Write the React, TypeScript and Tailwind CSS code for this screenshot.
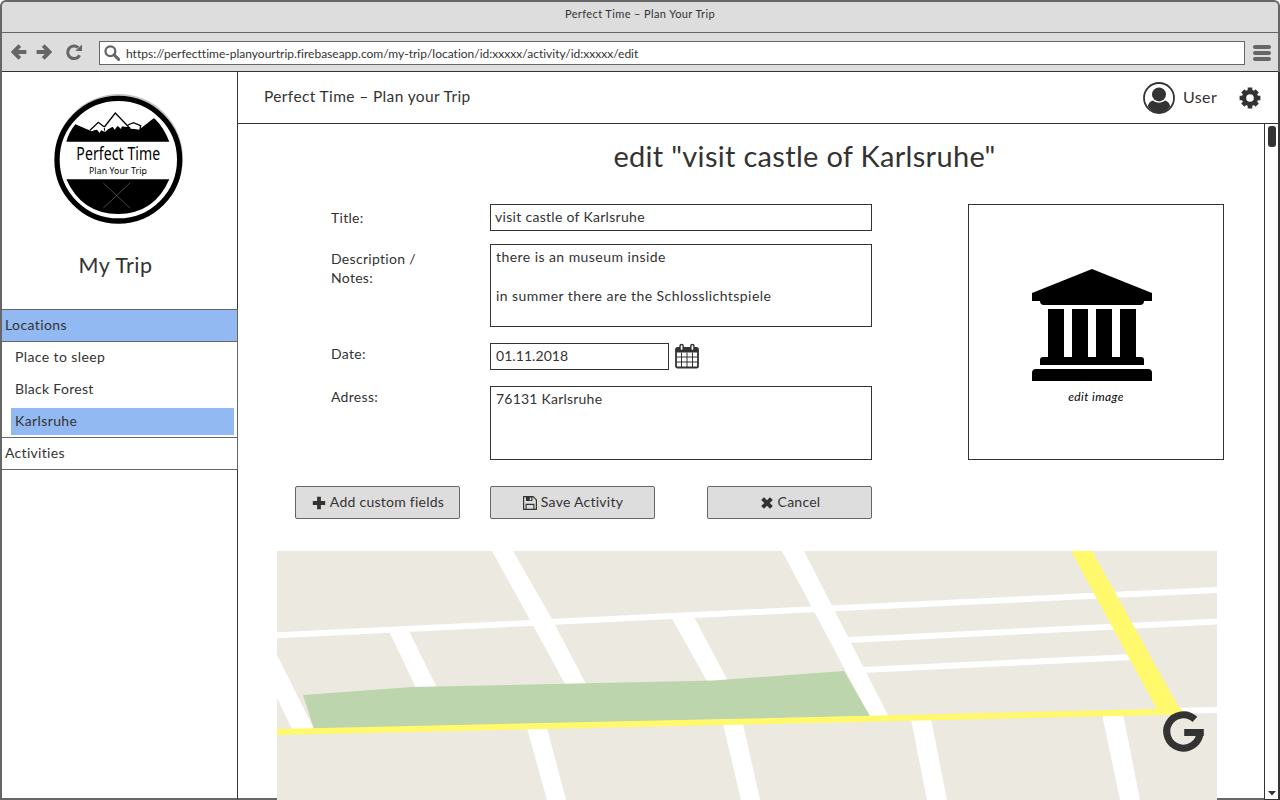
import type { ReactNode } from "react";

function ArrowIcon({ flip }: { flip?: boolean }) {
  return (
    <svg viewBox="0 0 16 16" className={flip ? "h-4 w-4 rotate-180" : "h-4 w-4"}>
      <path d="M8.800 1.600 2.400 8l6.400 6.400M3 8h12.400" fill="none" stroke="#666" strokeWidth="3.900" />
    </svg>
  );
}

function ReloadIcon() {
  return (
    <svg viewBox="0 0 18 18" className="h-[18px] w-[18px]">
      <path d="M14.600 12.200A6.300 6.300 0 1 1 13.200 4.600" fill="none" stroke="#666" strokeWidth="3" />
      <path d="M17 1.600V8h-6.600z" fill="#666" />
    </svg>
  );
}

function SearchIcon() {
  return (
    <svg viewBox="0 0 16 16" className="h-4 w-4">
      <circle cx="6.400" cy="6.200" r="4.900" fill="none" stroke="#666" strokeWidth="2.300" />
      <path d="m10 9.800 4.600 4.600" stroke="#666" strokeWidth="3" strokeLinecap="round" />
    </svg>
  );
}

function UserIcon() {
  return (
    <svg viewBox="0 0 32 32" className="h-8 w-8">
      <circle cx="16" cy="16" r="15" fill="#fff" stroke="#333" strokeWidth="1.800" />
      <circle cx="16" cy="12.400" r="7" fill="#333" />
      <path d="M4.800 24.600c.6-3.400 2.500-5.600 5.200-6.100 1.700 1.300 3.700 2.200 6 2.200s4.300-.9 6-2.200c2.700.5 4.600 2.700 5.200 6.100A15 15 0 0 1 16 31 15 15 0 0 1 4.800 24.600z" fill="#333" />
    </svg>
  );
}

function GearIcon() {
  return (
    <svg viewBox="-11 -11 22 22" className="h-[22px] w-[22px]">
      <circle r="6" fill="none" stroke="#333" strokeWidth="4.400" />
      <g stroke="#333" strokeWidth="4.600">
        <path d="M0-10.400V-7M0 7v3.400M-10.400 0H-7M7 0h3.400" />
        <path d="M0-10.200V-7M0 7v3.200M-10.200 0H-7M7 0h3.200" transform="rotate(45)" />
      </g>
    </svg>
  );
}

function CalendarIcon() {
  return (
    <svg viewBox="0 0 24 26" className="h-[26px] w-6">
      <rect x="1" y="5" width="22" height="19.500" rx="1.600" fill="#fff" stroke="#333" strokeWidth="1.800" />
      <path d="M1 5h22v4.500H1z" fill="#333" />
      <path d="M6.500 9.500V24M12 9.500V24M17.500 9.500V24M1 14h22M1 19h22" stroke="#333" strokeWidth="1" />
      <rect x="5" y="1.600" width="3.200" height="6" rx="1.600" fill="#fff" stroke="#333" strokeWidth="1.500" />
      <rect x="15.800" y="1.600" width="3.200" height="6" rx="1.600" fill="#fff" stroke="#333" strokeWidth="1.500" />
    </svg>
  );
}

function PlusIcon() {
  return (
    <svg viewBox="0 0 14 14" className="h-[14px] w-[14px]">
      <path d="M7 .8v12.400M.8 7h12.400" stroke="#333" strokeWidth="3.800" />
    </svg>
  );
}

function SaveIcon() {
  return (
    <svg viewBox="0 0 14 14" className="h-[14px] w-[14px]">
      <path d="M.6.600h9.600l3.200 3.200v9.600H.600z" fill="none" stroke="#333" strokeWidth="1.200" strokeLinejoin="round" />
      <path d="M3 1h6.500v4H3z" fill="#333" />
      <path d="M6.800 1.600h1.500v2.600H6.800z" fill="#ddd" />
      <path d="M3.100 13V8.400h7.800V13" fill="none" stroke="#333" strokeWidth="1.100" />
    </svg>
  );
}

function CloseIcon() {
  return (
    <svg viewBox="0 0 14 14" className="h-[14px] w-[14px]">
      <path d="m2.600 2.600 8.800 8.800M11.400 2.600l-8.800 8.800" stroke="#333" strokeWidth="4" />
    </svg>
  );
}

function Logo() {
  return (
    <svg viewBox="0 0 480 480" className="mt-2 ml-[38px] h-40 w-40">
      <circle cx="237" cy="234" r="192" fill="#c4c4c4" />
      <circle cx="235" cy="239" r="184" fill="#fff" stroke="#000" strokeWidth="16" />
      <path d="M79 185q8-29 27-52l49 21 20-8 51-8 56 4 17 6 42-33 4 2q26 25 43 68z" fill="#000" />
      <path d="m151 150 24-23 20 13-4 6 4 10-12-5-4 8-8-10z" fill="#fff" />
      <path d="m194 140 32-41 37 38-6 4-10-7-4 13-10-10-9 12-6-9-14 8-8 8z" fill="#fff" />
      <path d="m268 136 12-7 20 9-2 11-14-2-12-1z" fill="#fff" />
      <path d="m150 151 25-24 17 13M193 141l33-42 40 42M264 135l16-7 22 9-2 12" fill="none" stroke="#000" strokeWidth="4" />
      <path d="M79 298h309q-45 104-154 104T79 298z" fill="#000" />
      <path d="m190 309 80 75M270 309l-80 75" stroke="#777" strokeWidth="1.800" />
      <text x="109" y="239" fontFamily="Noto Sans, sans-serif" fontSize="52" textLength="252" lengthAdjust="spacingAndGlyphs">Perfect Time</text>
      <text x="147" y="282" fontFamily="Noto Sans, sans-serif" fontSize="29" textLength="174" lengthAdjust="spacingAndGlyphs">Plan Your Trip</text>
    </svg>
  );
}

function MuseumIcon() {
  return (
    <svg viewBox="0 0 120 112" className="mr-2 h-[112px] w-[120px]">
      <path d="M0 24 60 0l60 24v8h-8q0 4-4 4H12q-4 0-4-4H0z" />
      <path d="M16 40h16v48H16zM40 40h16v48H40zM64 40h16v48H64zM88 40h16v48H88z" />
      <path d="M8 96v-5q0-3 3-3h98q3 0 3 3v5zM0 112v-8q0-4 4-4h112q4 0 4 4v8z" />
    </svg>
  );
}

function CityMap() {
  return (
    <svg viewBox="0 0 940 249" className="h-[249px] w-[940px] shrink-0">
      <path d="M0 0h940v249H0z" fill="#ece9e0" />
      <g fill="#fff">
        <path d="M215 0h21l39 68 34 65h-21l-30-55z" />
        <path d="M112 80h20l28 57h-21z" />
        <path d="M0 104 37 178H15L0 147z" />
        <path d="M394 66h23l34 64h-21z" />
        <path d="M505 0h22l85 166h-19z" />
        <path d="M250 177h20l19 72h-19z" />
        <path d="M446 173h20l17 76h-19z" />
        <path d="M634 168h20l16 81h-20z" />
        <path d="M825 163h21l17 86h-20z" />
      </g>
      <g fill="none" stroke="#fff" strokeWidth="6">
        <path d="M0 84.300 473 61.300 940 39" />
        <path d="m571 89 369-18.500" />
        <path d="m585 119 270-13" />
        <path d="m890 160 50-1" />
      </g>
      <path d="m26 144 109-8 301-6.500 131-9.500 26 45-556 13z" fill="#bcd5ac" />
      <path d="m0 181 473-10.500 432-10" fill="none" stroke="#fff96b" strokeWidth="6" />
      <path d="M794 0h21l90 162h-23z" fill="#fff96b" />
      <path d="M917.900 168.300A16.700 16.700 0 1 0 923.100 181.500M907.200 181.500H926.800" fill="none" stroke="#333" strokeWidth="7.100" />
    </svg>
  );
}

function Label({ children, className }: { children: ReactNode; className: string }) {
  return <div className={`w-[159px] leading-[19px] ${className}`}>{children}</div>;
}

function Button({ icon, children, className }: { icon: ReactNode; children: ReactNode; className: string }) {
  return (
    <button className={`flex h-[33px] w-[165px] items-center justify-center gap-1 rounded-[2px] border border-[#666] bg-[#ddd] pl-px ${className}`}>
      {icon}
      <span className="pb-[2px]">{children}</span>
    </button>
  );
}

export default function App() {
  return (
    <div className="flex h-[800px] w-[1280px] flex-col overflow-hidden bg-white font-['Lato',sans-serif] text-[14px] tracking-[0.3px] text-[#333]">
      <div className="flex h-[72px] shrink-0 flex-col rounded-t-[6px] border-x-2 border-t-2 border-[#666] bg-[#ddd]">
        <div className="h-[31px] border-b border-[#666] pt-[2px] text-center text-[11px] leading-5 tracking-[0.39px]">
          Perfect Time – Plan Your Trip
        </div>
        <div className="flex grow items-center border-b border-[#333] pl-[9px]">
          <ArrowIcon />
          <div className="w-[9px]" />
          <ArrowIcon flip />
          <div className="w-[13px]" />
          <ReloadIcon />
          <div className="mt-[2px] ml-4 flex h-6 w-[1146px] items-center gap-[6px] border border-[#666] bg-white pl-1 text-[12px] tracking-[0.005px]">
            <SearchIcon />
            <span className="pt-[2px]">https://perfecttime-planyourtrip.firebaseapp.com/my-trip/location/id:xxxxx/activity/id:xxxxx/edit</span>
          </div>
          <div className="mt-[2px] ml-2 flex flex-col gap-[2px]">
            <div className="h-1 w-[18px] rounded-full bg-[#666]" />
            <div className="h-1 w-[18px] rounded-full bg-[#666]" />
            <div className="h-1 w-[18px] rounded-full bg-[#666]" />
          </div>
        </div>
      </div>

      <div className="flex grow border-l-2 border-[#666]">
        <aside className="flex w-[236px] shrink-0 flex-col border-r border-b-2 border-r-[#333] border-b-[#666]">
          <Logo />
          <div className="mt-[10px] h-[59px] pr-2 text-center text-[21.500px] leading-[30px] tracking-[0.5px]">My Trip</div>
          <nav className="-mr-px border-r border-[#666]">
            <div className="h-[33px] border-y border-[#666] bg-[#93b9f2] pl-[3px] leading-[29px] tracking-[0.4px]">Locations</div>
            <div className="h-8 pl-[13px] leading-[29px] tracking-[0.4px]">Place to sleep</div>
            <div className="h-8 pl-[13px] leading-[29px]">Black Forest</div>
            <div className="mt-[2px] mr-[3px] mb-[2px] ml-[9px] h-[27px] bg-[#93b9f2] pl-1 leading-[25px] tracking-[0.4px]">Karlsruhe</div>
            <div className="h-[33px] border-y border-[#666] pl-[3px] leading-[29px] tracking-[0.3px]">Activities</div>
          </nav>
        </aside>

        <div className="flex grow flex-col">
          <header className="flex h-[52px] shrink-0 items-center border-r-2 border-b border-[#333] pl-[26px]">
            <span className="w-[879px] pb-[2px] text-[15.500px] tracking-[0.38px]">Perfect Time – Plan your Trip</span>
            <UserIcon />
            <span className="ml-2 w-[56px] pb-[2px] text-[16px] tracking-[0.4px]">User</span>
            <GearIcon />
          </header>

          <div className="flex grow">
            <main className="flex w-[1026px] shrink-0 flex-col">
              <h1 className="h-20 pl-[107px] text-center text-[29px] leading-[64px] tracking-[0.31px]">edit "visit castle of Karlsruhe"</h1>

              <div className="flex h-[256px] pl-[93px]">
                <div className="w-[541px] shrink-0">
                  <div className="flex">
                    <Label className="pt-[4px]">Title:</Label>
                    <div className="h-[27px] w-[382px] border border-[#333] pl-1 leading-[23px]">visit castle of Karlsruhe</div>
                  </div>
                  <div className="mt-[13px] flex">
                    <Label className="pt-[5px] tracking-[0.3px]">
                      Description /
                      <br />
                      Notes:
                    </Label>
                    <div className="h-[83px] w-[382px] border border-[#333] pt-[2px] pl-[5px] leading-[19.500px] tracking-[0.44px] whitespace-pre-line">
                      {"there is an museum inside\n\nin summer there are the Schlosslichtspiele"}
                    </div>
                  </div>
                  <div className="mt-4 flex">
                    <Label className="pt-px">Date:</Label>
                    <div className="h-[27px] w-[179px] border border-[#333] pl-[5px] leading-[23px] tracking-[0.06px]">01.11.2018</div>
                    <div className="ml-[6px] h-[26px]">
                      <CalendarIcon />
                    </div>
                  </div>
                  <div className="mt-4 flex">
                    <Label className="pt-px">Adress:</Label>
                    <div className="h-[74px] w-[382px] border border-[#333] pt-[2px] pl-[5px] leading-[19px] tracking-[0.22px]">76131 Karlsruhe</div>
                  </div>
                </div>
                <div className="ml-24 flex h-[256px] w-[256px] flex-col items-center border border-[#333] pt-16 text-black">
                  <MuseumIcon />
                  <span className="mt-2 text-[12px] leading-4 tracking-[0.4px] italic">edit image</span>
                </div>
              </div>

              <div className="mt-[26px] flex pl-[57px] tracking-[0.25px]">
                <Button icon={<PlusIcon />} className="">Add custom fields</Button>
                <Button icon={<SaveIcon />} className="ml-[30px]">Save Activity</Button>
                <Button icon={<CloseIcon />} className="ml-[52px]">Cancel</Button>
              </div>

              <div className="mt-8 flex h-[249px]">
                <div className="h-[249px] w-[39px] border-b-2 border-[#666]" />
                <CityMap />
                <div className="h-[249px] w-[47px] border-b-2 border-[#666]" />
              </div>
            </main>

            <div className="flex grow flex-col items-center justify-between border-r-2 border-b border-l border-[#333] pt-[2px] pb-[3px]">
              <div className="h-[21px] w-2 rounded-[3px] bg-[#333]" />
              <svg viewBox="0 0 8 5" className="h-[5px] w-2">
                <path d="M0 0h8L4 4.500z" fill="#333" />
              </svg>
            </div>
          </div>
        </div>
      </div>
    </div>
  );
}
